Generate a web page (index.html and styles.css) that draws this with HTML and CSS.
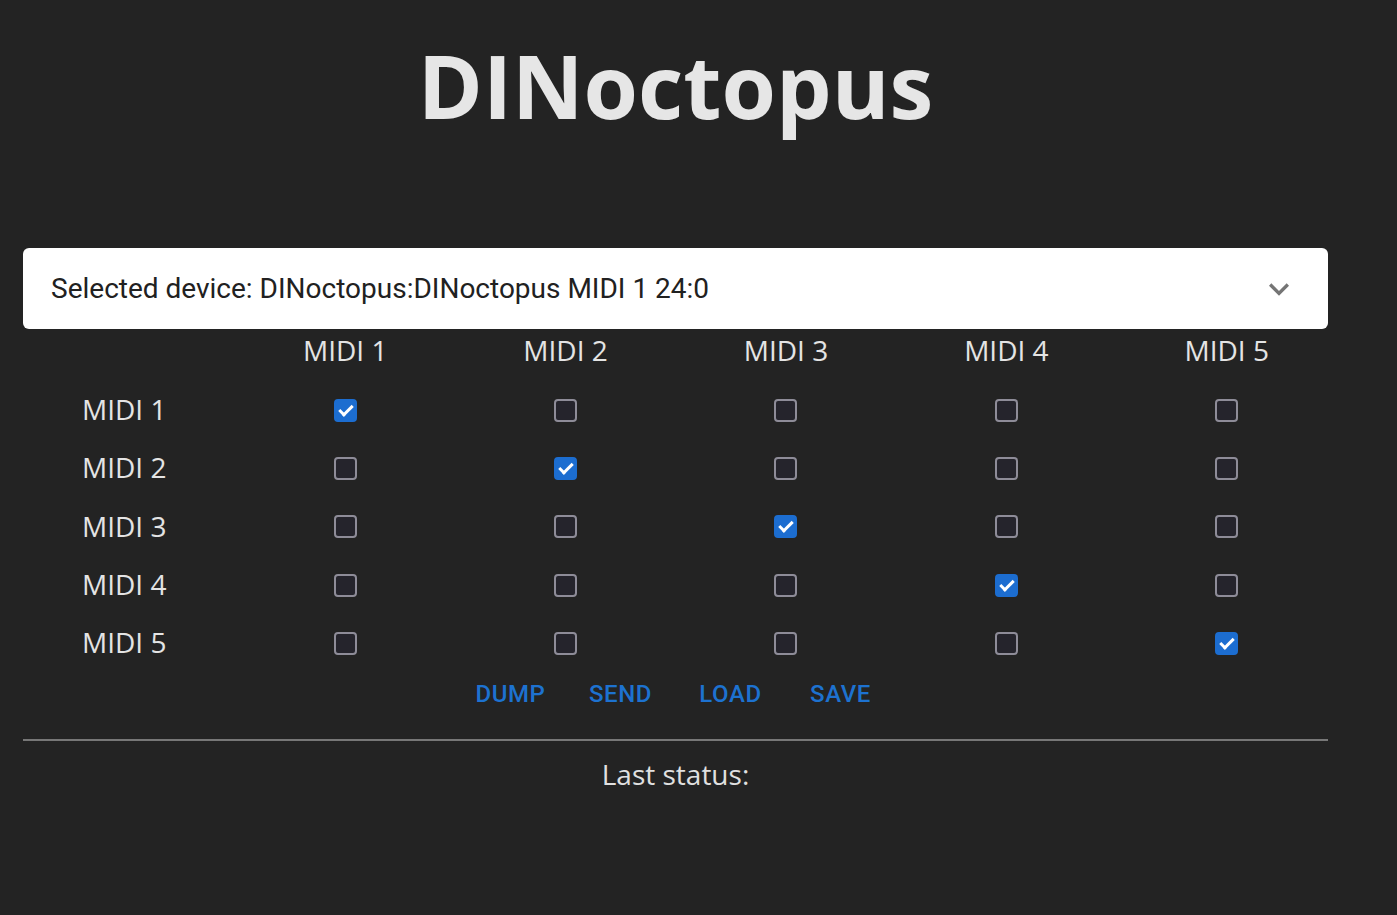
FILE: index.html
```html
<!DOCTYPE HTML>
<html>

<head>
  <meta charset="utf-8">
  <title>DINoctopus</title>
  <link rel="stylesheet" href="styles.css">
</head>

<body>

  <div class="app">
    <h1 class="title">DINoctopus</h1>

    <div class="device-select">
      <span>Selected device: DINoctopus:DINoctopus MIDI 1 24:0</span>
      <svg class="chevron" width="24" height="24" viewBox="0 0 24 24">
        <path d="M7.4 8.6 12 13.2l4.6-4.6L18 10l-6 6-6-6z" fill="#757575" />
      </svg>
    </div>

    <div class="matrix">
      <div class="head"></div>
      <div class="head">MIDI 1</div>
      <div class="head">MIDI 2</div>
      <div class="head">MIDI 3</div>
      <div class="head">MIDI 4</div>
      <div class="head">MIDI 5</div>

      <div class="label">MIDI 1</div>
      <div class="cell"><span class="box checked"></span></div>
      <div class="cell"><span class="box"></span></div>
      <div class="cell"><span class="box"></span></div>
      <div class="cell"><span class="box"></span></div>
      <div class="cell"><span class="box"></span></div>

      <div class="label">MIDI 2</div>
      <div class="cell"><span class="box"></span></div>
      <div class="cell"><span class="box checked"></span></div>
      <div class="cell"><span class="box"></span></div>
      <div class="cell"><span class="box"></span></div>
      <div class="cell"><span class="box"></span></div>

      <div class="label">MIDI 3</div>
      <div class="cell"><span class="box"></span></div>
      <div class="cell"><span class="box"></span></div>
      <div class="cell"><span class="box checked"></span></div>
      <div class="cell"><span class="box"></span></div>
      <div class="cell"><span class="box"></span></div>

      <div class="label">MIDI 4</div>
      <div class="cell"><span class="box"></span></div>
      <div class="cell"><span class="box"></span></div>
      <div class="cell"><span class="box"></span></div>
      <div class="cell"><span class="box checked"></span></div>
      <div class="cell"><span class="box"></span></div>

      <div class="label">MIDI 5</div>
      <div class="cell"><span class="box"></span></div>
      <div class="cell"><span class="box"></span></div>
      <div class="cell"><span class="box"></span></div>
      <div class="cell"><span class="box"></span></div>
      <div class="cell"><span class="box checked"></span></div>
    </div>

    <div class="actions">
      <button class="text-btn">Dump</button>
      <button class="text-btn">Send</button>
      <button class="text-btn">Load</button>
      <button class="text-btn">Save</button>
    </div>

    <hr class="divider">

    <p class="status">Last status:</p>
  </div>

</body>

</html>
```

FILE: styles.css
```css
body {
  margin: 0;
  background: #232323;
  color: #e4e4e4;
  font-family: "Open Sans", "Noto Sans", sans-serif;
}

.app {
  width: 1305px;
  margin-left: 23px;
}

.title {
  margin: 28px 0 0;
  height: 115px;
  font-size: 88px;
  font-weight: 700;
  line-height: 115px;
  text-align: center;
  color: #e6e6e6;
}

.device-select {
  display: flex;
  align-items: center;
  justify-content: space-between;
  margin-top: 105px;
  height: 81px;
  padding: 0 28px;
  box-sizing: border-box;
  background: #fff;
  border-radius: 6px;
  font-family: Roboto, sans-serif;
  font-size: 28px;
  color: #212121;
}

.chevron {
  width: 40px;
  height: 40px;
  margin-right: 1px;
}

.matrix {
  display: grid;
  grid-template-columns: 212px repeat(5, 220.4px);
  grid-template-rows: 52px repeat(5, 58.3px);
  font-size: 28px;
}

.head {
  text-align: center;
  line-height: 42px;
}

.label {
  display: flex;
  align-items: center;
  padding-left: 59px;
  padding-bottom: 2px;
}

.cell {
  display: flex;
  align-items: center;
  justify-content: center;
}

.box {
  position: relative;
  width: 23px;
  height: 23px;
  box-sizing: border-box;
  border: 2px solid #8e8c98;
  border-radius: 4px;
  background: #25242c;
}

.box.checked {
  border-color: #1c6dd0;
  background: #1c6dd0;
}

.box.checked::after {
  content: "";
  position: absolute;
  left: 6px;
  top: 1px;
  width: 5px;
  height: 11px;
  border: solid #fff;
  border-width: 0 3px 3px 0;
  transform: rotate(45deg);
}

.actions {
  display: grid;
  grid-template-columns: repeat(4, 110px);
  justify-content: center;
  justify-items: center;
  align-items: center;
  height: 44px;
}

.text-btn {
  padding: 6px 8px;
  border: none;
  background: transparent;
  font-family: Roboto, sans-serif;
  font-size: 24px;
  font-weight: 500;
  letter-spacing: 0.6px;
  text-transform: uppercase;
  color: #1d72d0;
  cursor: pointer;
}

.divider {
  margin: 23px 0 0;
  border: none;
  border-top: 2px solid #777;
}

.status {
  margin: 15px 0 0;
  text-align: center;
  font-size: 28px;
  line-height: 36px;
  color: #e0e0e0;
}
```
